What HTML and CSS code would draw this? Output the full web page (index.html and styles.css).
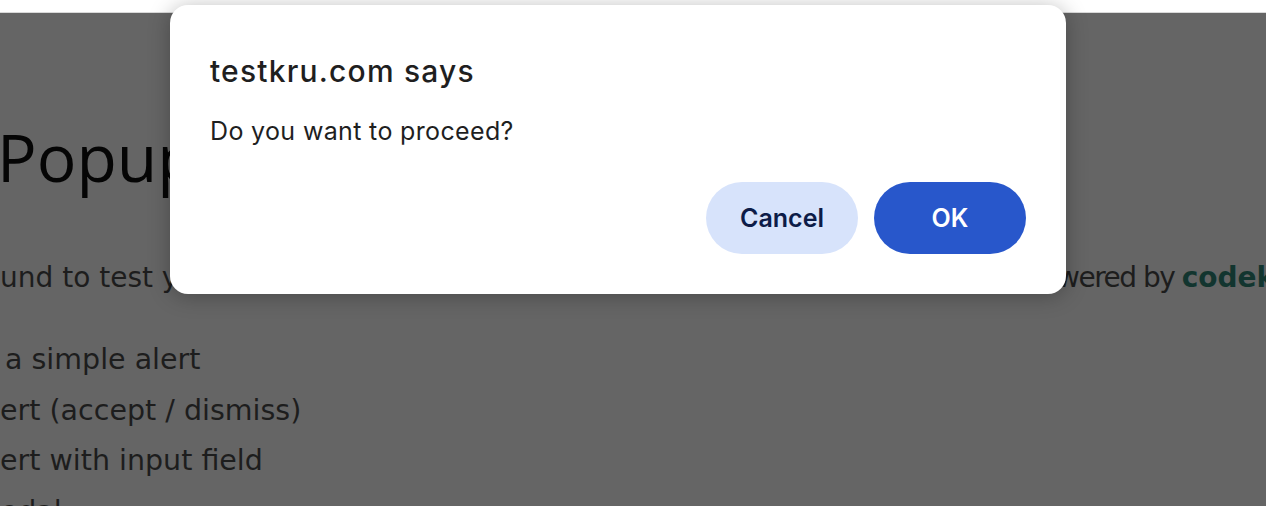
FILE: index.html
```html
<!DOCTYPE html>
<html lang="en">
<head>
<meta charset="utf-8">
<title>Popup Alerts</title>
<link rel="stylesheet" href="styles.css">
</head>
<body>
<div class="topbar"></div>
<main class="page">
  <h1 class="title">Popup</h1>
  <p class="intro"><span class="intro-start">und to test y</span><span class="intro-end">wered by <b class="brand">codekru</b></span></p>
  <ul class="list">
    <li class="item-first">a simple alert</li>
    <li>ert (accept / dismiss)</li>
    <li>ert with input field</li>
    <li class="item-last">modal</li>
  </ul>
</main>
<div class="dialog" role="alertdialog">
  <h2 class="dialog-title">testkru.com says</h2>
  <p class="dialog-msg">Do you want to proceed?</p>
  <div class="dialog-actions">
    <button class="btn btn-cancel">Cancel</button>
    <button class="btn btn-ok">OK</button>
  </div>
</div>
</body>
</html>
```
FILE: styles.css
```css
html, body {
  margin: 0;
  padding: 0;
  height: 100%;
  overflow: hidden;
}
body {
  background: #656565;
  font-family: "DejaVu Sans", "Open Sans", sans-serif;
}
.topbar {
  height: 12px;
  background: #ffffff;
  border-bottom: 1px solid #d9d9d9;
}
.page {
  background: #656565;
  color: #1d1d1d;
  padding: 0;
}
.title {
  margin: 110px 0 0 -3px;
  font-family: "Open Sans", sans-serif;
  font-size: 66px;
  line-height: 66px;
  font-weight: 400;
  color: #050505;
}
.intro {
  display: flex;
  margin: 72px 0 0 0;
  font-size: 28px;
  line-height: 34px;
  white-space: nowrap;
}
.intro-start {
  flex: 0 0 1057px;
}
.intro-end {
  letter-spacing: -1.5px;
}
.brand {
  color: #12352f;
  font-weight: 700;
  letter-spacing: 0;
}
.list {
  list-style: none;
  margin: 40px 0 0 0;
  padding: 0;
  font-size: 28.5px;
  line-height: 50.5px;
  white-space: nowrap;
}
.item-first {
  padding-left: 5px;
}
.item-last {
  text-indent: -27px;
}
.dialog {
  position: absolute;
  left: 170px;
  top: 5px;
  width: 816px;
  padding: 48px 40px 40px;
  background: #ffffff;
  border-radius: 18px;
  box-shadow: 0 2px 22px rgba(0, 0, 0, 0.28);
  font-family: Inter, "Noto Sans", sans-serif;
  color: #1f1f1f;
}
.dialog-title {
  margin: 0;
  font-size: 30px;
  line-height: 36px;
  font-weight: 500;
  letter-spacing: 1.2px;
}
.dialog-msg {
  margin: 27px 0 0;
  font-size: 25px;
  line-height: 30px;
  font-weight: 400;
  letter-spacing: 0.35px;
}
.dialog-actions {
  display: flex;
  justify-content: flex-end;
  gap: 16px;
  margin-top: 36px;
}
.btn {
  width: 152px;
  height: 72px;
  border: none;
  border-radius: 36px;
  font-family: Inter, "Noto Sans", sans-serif;
  font-size: 25px;
  font-weight: 600;
  padding: 0;
}
.btn-cancel {
  background: #d7e3fb;
  color: #0d1c48;
}
.btn-ok {
  background: #2857cb;
  color: #ffffff;
}
```
